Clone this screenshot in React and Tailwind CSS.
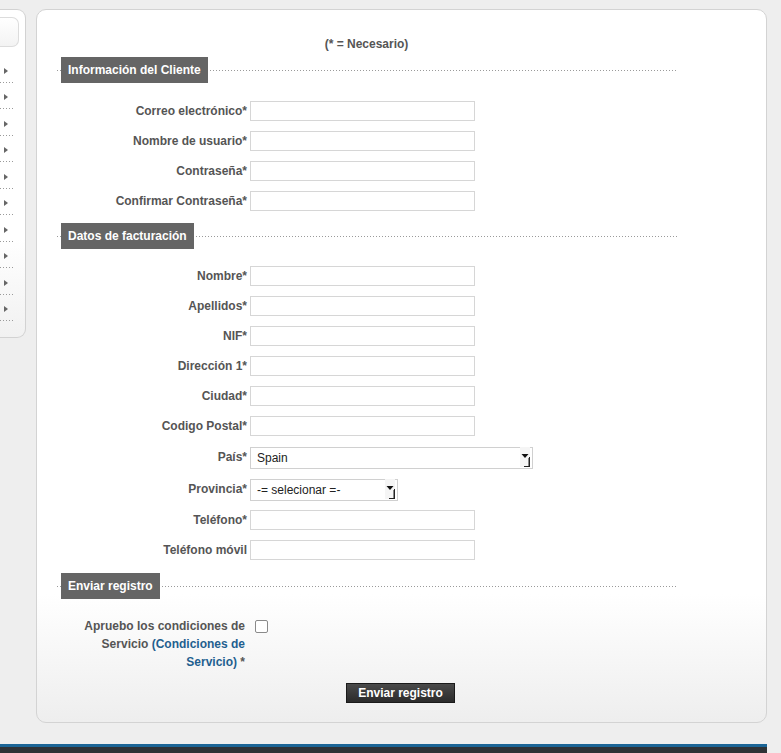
import React from "react";

const dots = "h-px bg-[linear-gradient(to_right,#9a9a9a_1px,transparent_1px)] bg-[length:3px_1px]";

function SelectArrow() {
  return (
    <svg width="10" height="20" viewBox="0 0 10 20" className="pointer-events-none absolute right-[3px] top-1/2 -translate-y-1/2">
      <rect x="0" y="0" width="10" height="20" fill="#f5f5f5" />
      <polygon points="1.5,7 8.5,7 5,11" fill="#111" />
      <rect x="9" y="10" width="1" height="10" fill="#222" />
      <rect x="4" y="19" width="6" height="1" fill="#222" />
      <rect x="8" y="11" width="1" height="8" fill="#888" />
    </svg>
  );
}

function SectionHeader({ title, className = "" }) {
  return (
    <div className={`flex items-center ${className}`}>
      <div className={`w-[4px] ${dots}`} />
      <div className="bg-[#656565] px-[7px] h-[26px] flex items-center text-white font-bold text-[12px]">
        {title}
      </div>
      <div className={`flex-1 ml-[2px] ${dots}`} />
    </div>
  );
}

function Field({ label, h = "h-[30px]", children }) {
  return (
    <div className={`flex items-center ${h}`}>
      <label className="w-[190px] text-right text-[12px] font-bold text-[#555]">{label}</label>
      <div className="ml-[3px] flex">{children}</div>
    </div>
  );
}

function TextInput({ type = "text" }) {
  return (
    <input
      type={type}
      className="w-[225px] h-[20px] border border-[#d6d6d6] bg-white outline-none text-[12px] px-1"
    />
  );
}

function Select({ width, value }) {
  return (
    <div className={`relative ${width}`}>
      <select className="appearance-none w-full h-[22px] border border-[#d0d0d0] bg-white pl-[6px] text-[12px] text-[#222] outline-none">
        <option>{value}</option>
      </select>
      <SelectArrow />
    </div>
  );
}

export default function App() {
  const sideItems = Array.from({ length: 10 });

  return (
    <div className="min-h-[753px] bg-[#eeeeee] font-['Liberation_Sans',Arial,sans-serif] flex flex-col overflow-hidden">
      <div className="flex items-start pt-[9px] gap-[10px]">
        {/* Left sidebar (cut off by viewport) */}
        <div className="w-[26px] h-[329px] shrink-0 border border-l-0 border-[#d2d2d2] rounded-r-[9px] bg-linear-to-b from-white from-70% to-[#f1f1f1] pt-[7px]">
          <div className="w-[19px] h-[30px] border border-l-0 border-[#dcdcdc] rounded-r-[7px] bg-linear-to-b from-white to-[#f3f3f3]" />
          <div className="mt-[10px]">
            {sideItems.map((_, i) => (
              <div key={i} className="h-[26.5px] flex flex-col justify-end">
                <div className="flex items-center h-[10px] pl-[4px]">
                  <span className="w-0 h-0 border-y-[3px] border-y-transparent border-l-[4px] border-l-[#666]" />
                </div>
                <div className={`w-[13px] mb-[1px] mt-[6px] ${dots}`} />
              </div>
            ))}
          </div>
        </div>

        {/* Main panel */}
        <div className="w-[731px] h-[714px] shrink-0 border border-[#d3d3d3] rounded-[10px] bg-linear-to-b from-white from-82% to-[#eeeeee] pl-[20px] pt-[26px]">
          <div className="w-[621px]">
            <p className="text-center text-[12px] font-bold text-[#555] leading-[16px] pr-[2px]">(* = Necesario)</p>

            <SectionHeader title="Información del Cliente" className="mt-[5px] mb-[13px]" />
            <Field label="Correo electrónico*"><TextInput /></Field>
            <Field label="Nombre de usuario*"><TextInput /></Field>
            <Field label="Contraseña*"><TextInput type="password" /></Field>
            <Field label="Confirmar Contraseña*"><TextInput type="password" /></Field>

            <SectionHeader title="Datos de facturación" className="mt-[7px] mb-[12px]" />
            <Field label="Nombre*"><TextInput /></Field>
            <Field label="Apellidos*"><TextInput /></Field>
            <Field label="NIF*"><TextInput /></Field>
            <Field label="Dirección 1*"><TextInput /></Field>
            <Field label="Ciudad*"><TextInput /></Field>
            <Field label="Codigo Postal*"><TextInput /></Field>
            <Field label="País*" h="h-[32px]"><Select width="w-[283px]" value="Spain" /></Field>
            <Field label="Provincia*" h="h-[32px]"><Select width="w-[148px]" value="-= selecionar =-" /></Field>
            <Field label="Teléfono*"><TextInput /></Field>
            <Field label="Teléfono móvil"><TextInput /></Field>

            <SectionHeader title="Enviar registro" className="mt-[8px] mb-[18px]" />
            <div className="flex items-start">
              <label className="w-[188px] text-right text-[12px] font-bold text-[#555] leading-[18px]">
                Apruebo los condiciones de Servicio{" "}
                <a href="#" className="text-[#1f5f8f]">(Condiciones de Servicio)</a> *
              </label>
              <input
                type="checkbox"
                className="ml-[10px] mt-[3px] w-[13px] h-[13px] appearance-none border border-[#8a8a8a] rounded-[2px] bg-white"
              />
            </div>

            <div className="flex justify-center mt-[12px] pl-[66px]">
              <button className="h-[20px] px-[11px] border border-[#1a1a1a] bg-linear-to-b from-[#4a4a4a] to-[#2b2b2b] text-white text-[12px] font-bold">
                Enviar registro
              </button>
            </div>
          </div>
        </div>
      </div>

      <div className="mt-[21px] w-[767px] border-t-[3px] border-[#1b6596] bg-[#2e3236] h-[10px]" />
    </div>
  );
}
